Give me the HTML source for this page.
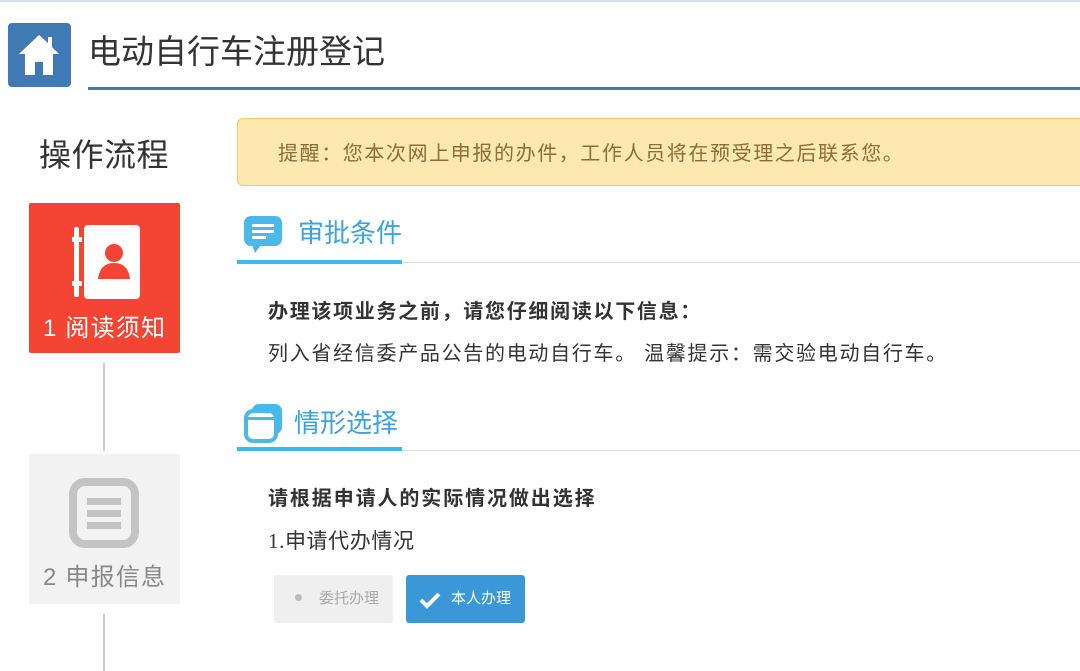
<!DOCTYPE html><html><head><meta charset="utf-8"><style>
*{margin:0;padding:0;box-sizing:border-box}
body{width:1080px;height:671px;overflow:hidden;background:#fff;position:relative;font-family:"Liberation Sans","Noto Sans CJK SC",sans-serif}
.a{position:absolute;white-space:nowrap}
</style></head><body>
<div class="a" style="left:0;top:0;width:1080px;height:2px;background:#cfe0f0"></div>
<div class="a" style="left:8px;top:23px;width:63px;height:64px;background:#3f7ab5;border-radius:4px">
<svg width="63" height="64" viewBox="0 0 63 64"><path d="M31 12 L11 31 L17 31 L17 52 L27 52 L27 39 L35 39 L35 52 L45 52 L45 31 L51 31 L44 24 L44 14 L40 14 L40 20 Z" fill="#fff"/></svg></div>
<div class="a" style="left:88px;top:30px;font-size:33px;color:#333;line-height:44px">电动自行车注册登记</div>
<div class="a" style="left:88px;top:87px;width:992px;height:3px;background:#3f7ab5"></div>
<div class="a" style="left:39px;top:134px;font-size:32px;color:#333;line-height:42px;letter-spacing:0.5px">操作流程</div>
<div class="a" style="left:29px;top:203px;width:151px;height:150px;background:#f44433;border-radius:2px">
<svg class="a" style="left:43px;top:20px" width="70" height="78" viewBox="0 0 70 78"><rect x="12" y="2" width="56" height="74" rx="4" fill="#fff"/><rect x="2" y="4" width="5" height="70" rx="2" fill="#fff"/><rect x="0" y="14" width="10" height="5" fill="#fff"/><rect x="0" y="58" width="10" height="5" fill="#fff"/><circle cx="42" cy="30" r="9" fill="#f44433"/><path d="M26 56 Q28 40 42 40 Q56 40 58 56 Z" fill="#f44433"/></svg>
<div class="a" style="left:14px;top:110px;font-size:24px;color:#fff;line-height:32px;letter-spacing:1.2px">1 阅读须知</div></div>
<div class="a" style="left:103px;top:363px;width:2px;height:88px;background:#ccc"></div>
<div class="a" style="left:29px;top:454px;width:151px;height:150px;background:#f2f2f2;border-radius:2px">
<svg class="a" style="left:40px;top:24px" width="70" height="70" viewBox="0 0 70 70"><rect x="4" y="4" width="62" height="62" rx="12" fill="none" stroke="#c4c4c4" stroke-width="8"/><rect x="18" y="20" width="34" height="7" fill="#c4c4c4"/><rect x="18" y="32" width="34" height="7" fill="#c4c4c4"/><rect x="18" y="44" width="34" height="7" fill="#c4c4c4"/></svg>
<div class="a" style="left:14px;top:108px;font-size:24px;color:#888;line-height:32px;letter-spacing:1.2px">2 申报信息</div></div>
<div class="a" style="left:103px;top:614px;width:2px;height:57px;background:#ccc"></div>
<div class="a" style="left:237px;top:118px;width:860px;height:68px;background:#fde8b0;border:1px solid #f6c468;border-radius:6px"></div>
<div class="a" style="left:278px;top:140px;font-size:20px;color:#8a6d3b;line-height:28px;letter-spacing:1.6px">提醒：您本次网上申报的办件，工作人员将在预受理之后联系您。</div>
<svg class="a" style="left:244px;top:216px" width="40" height="38" viewBox="0 0 40 38"><rect x="0" y="0" width="38" height="30" rx="7" fill="#4ab8e8"/><path d="M8 29 L11 37 L17 29Z" fill="#4ab8e8"/><rect x="8" y="8" width="22" height="3" fill="#fff"/><rect x="8" y="14" width="22" height="3" fill="#fff"/><rect x="8" y="20" width="14" height="3" fill="#fff"/></svg>
<div class="a" style="left:298px;top:216px;font-size:26px;color:#3aa3e0;line-height:34px">审批条件</div>
<div class="a" style="left:237px;top:262px;width:843px;height:1px;background:#ddd"></div>
<div class="a" style="left:237px;top:260px;width:165px;height:4px;background:#3bbde9"></div>
<div class="a" style="left:268px;top:298px;font-size:20px;font-weight:bold;color:#333;line-height:28px;letter-spacing:1.7px">办理该项业务之前，请您仔细阅读以下信息：</div>
<div class="a" style="left:268px;top:340px;font-size:20px;color:#333;line-height:28px;letter-spacing:1.7px">列入省经信委产品公告的电动自行车。 温馨提示：需交验电动自行车。</div>
<svg class="a" style="left:244px;top:403px" width="40" height="40" viewBox="0 0 40 40"><rect x="8" y="1" width="30" height="30" rx="7" fill="#4ab8e8"/><rect x="2" y="8" width="30" height="30" rx="7" fill="#fff" stroke="#4ab8e8" stroke-width="4"/><rect x="4" y="14" width="26" height="3" fill="#4ab8e8"/></svg>
<div class="a" style="left:294px;top:406px;font-size:26px;color:#3aa3e0;line-height:34px">情形选择</div>
<div class="a" style="left:237px;top:450px;width:843px;height:1px;background:#ddd"></div>
<div class="a" style="left:237px;top:447px;width:165px;height:4px;background:#3bbde9"></div>
<div class="a" style="left:268px;top:485px;font-size:20px;font-weight:bold;color:#333;line-height:28px;letter-spacing:1.9px">请根据申请人的实际情况做出选择</div>
<div class="a" style="left:268px;top:527px;font-size:21px;color:#333;line-height:28px;letter-spacing:0.6px"><span style="font-family:'Liberation Serif',serif">1.</span>申请代办情况</div>
<div class="a" style="left:274px;top:575px;width:119px;height:48px;background:#efefef;border-radius:3px;font-size:15px;color:#aaa;line-height:48px"><span style="display:inline-block;width:7px;height:7px;border-radius:50%;background:#bbb;margin:0 17px 2px 21px"></span>委托办理</div>
<div class="a" style="left:406px;top:575px;width:119px;height:48px;background:#3a98d8;border-radius:3px;font-size:15px;color:#fff;line-height:48px"><svg style="position:absolute;left:13px;top:16px" width="22" height="18" viewBox="0 0 22 18"><path d="M2 9 L8 15 L20 3" fill="none" stroke="#fff" stroke-width="4"/></svg><span style="position:absolute;left:45px">本人办理</span></div>
</body></html>
